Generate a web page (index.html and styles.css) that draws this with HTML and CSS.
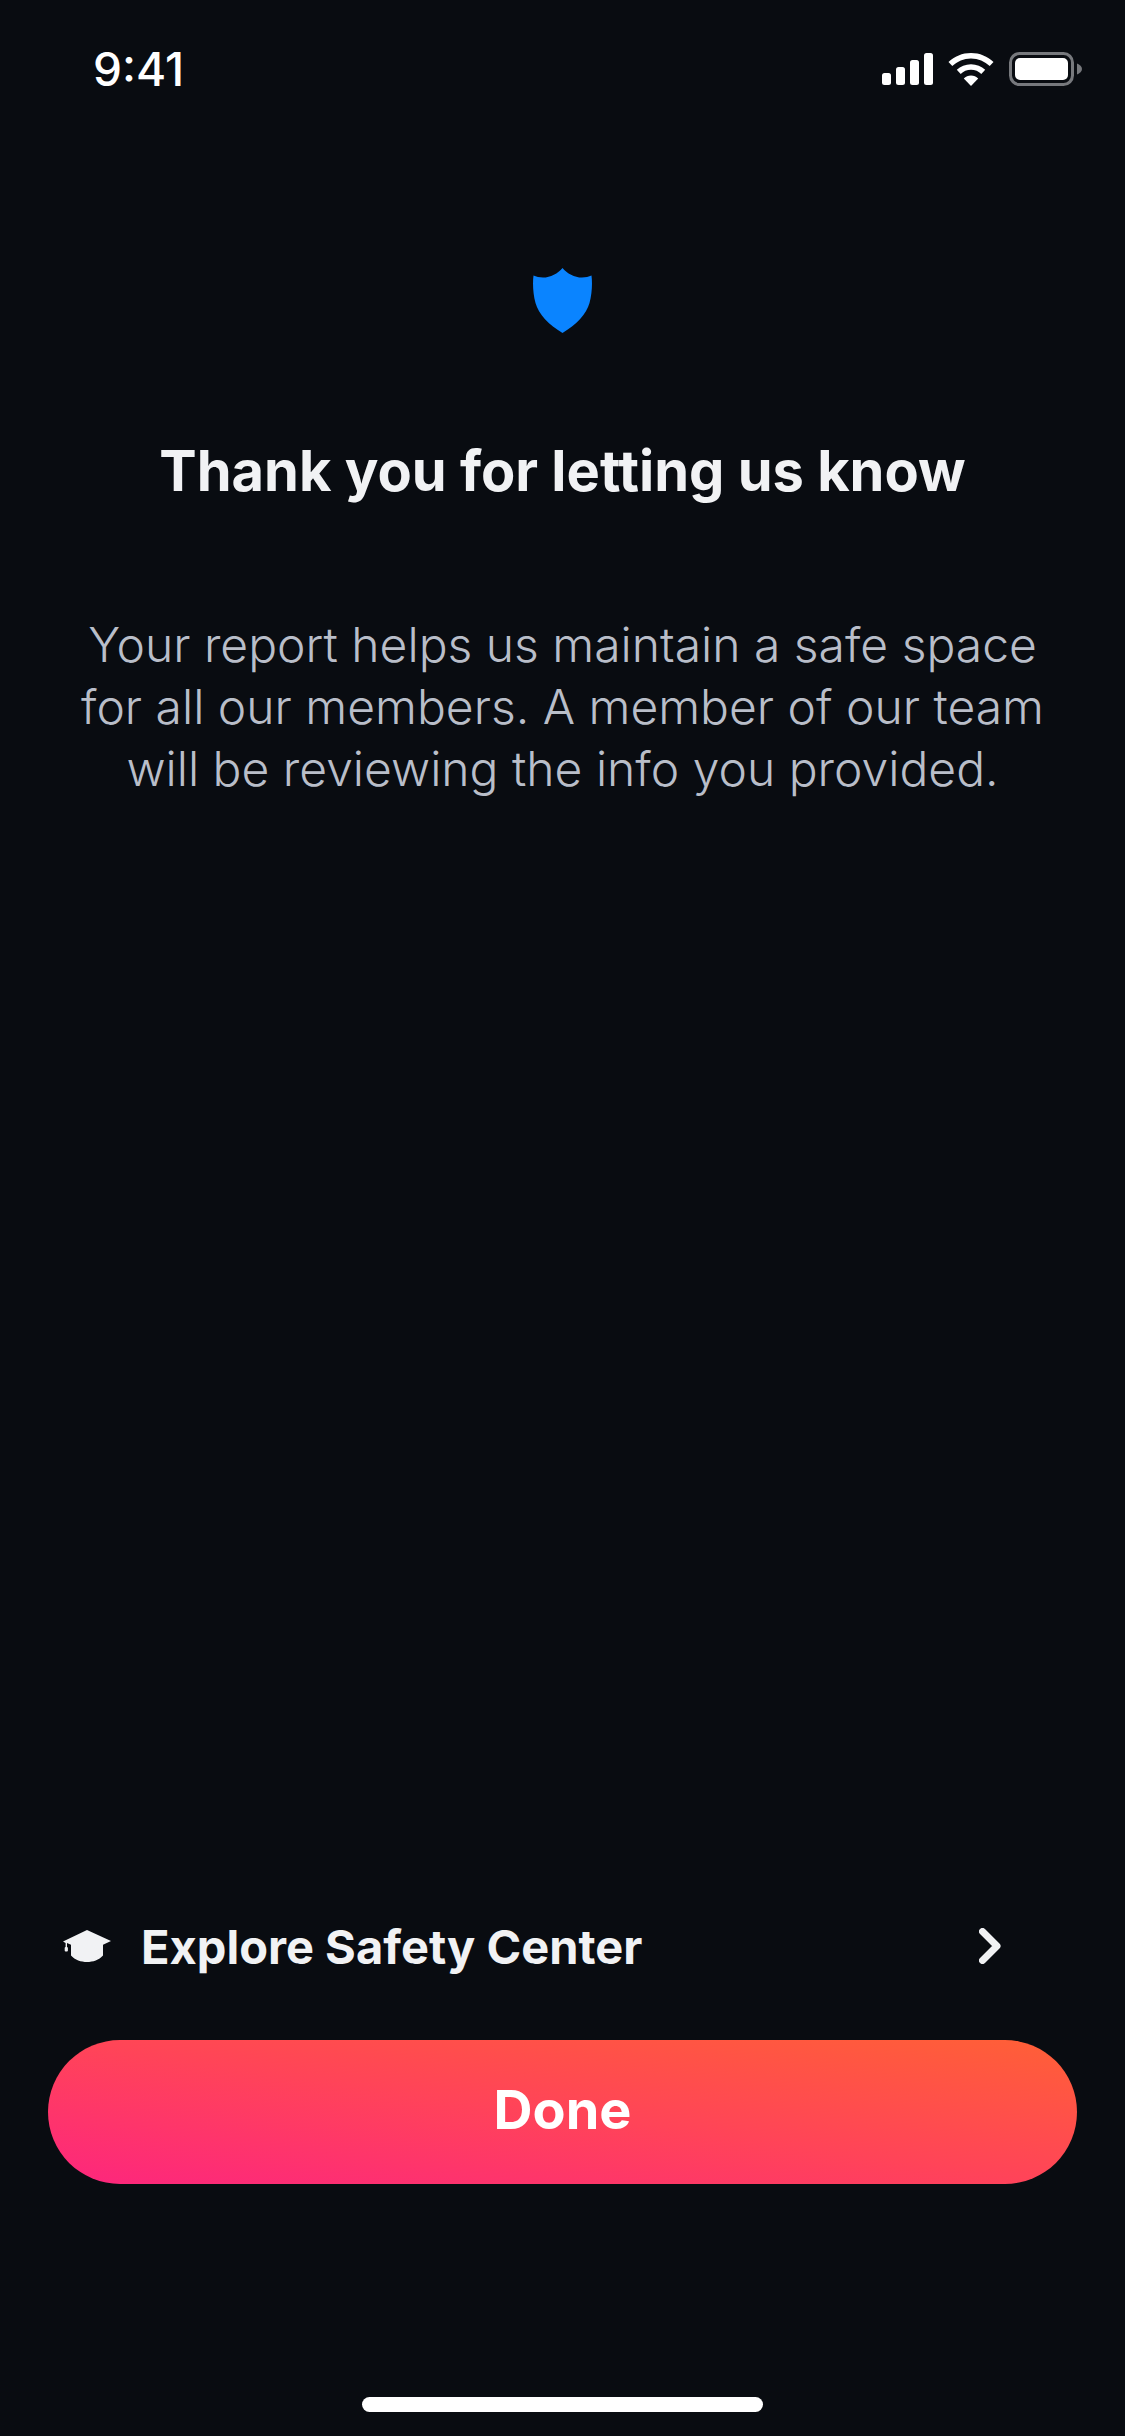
FILE: index.html
```html
<!DOCTYPE html>
<html lang="en">
<head>
<meta charset="utf-8">
<title>Thank you</title>
<link rel="stylesheet" href="styles.css">
</head>
<body>
<main class="screen">
  <header class="status">
    <span class="time">9:41</span>
    <div class="status-icons">
      <svg class="signal" width="51" height="32" viewBox="0 0 51 32"><rect x="0" y="20" width="9" height="12" rx="2.5"/><rect x="14" y="14" width="9" height="18" rx="2.5"/><rect x="28" y="7" width="9" height="25" rx="2.5"/><rect x="42" y="0" width="9" height="32" rx="2.5"/></svg>
      <svg class="wifi" width="46" height="33" viewBox="0 0 46 33"><path d="M23 0C14.300 0 6.400 3.400 .5 9l3.800 4C9.200 8.300 15.800 5.400 23 5.400S36.800 8.300 41.700 13l3.800-4C39.600 3.400 31.700 0 23 0Z"/><path d="M23 11.200c-5.500 0-10.500 2.100-14.200 5.600l3.900 4.100c2.700-2.500 6.300-4.100 10.300-4.100s7.600 1.600 10.300 4.100l3.900-4.100c-3.700-3.500-8.700-5.600-14.200-5.600Z"/><path d="M23 22.600c-2.800 0-5.300 1.100-7.200 2.800L23 33l7.200-7.600c-1.900-1.700-4.400-2.800-7.200-2.800Z"/></svg>
      <svg class="battery" width="73" height="34" viewBox="0 0 73 34"><rect x="1.500" y="1.500" width="62" height="31" rx="9" fill="none" stroke="#77797d" stroke-width="3"/><rect x="6" y="6" width="53" height="22" rx="5" fill="#fff"/><path d="M68 11.500c2.800 1 5 3 5 5.500s-2.200 4.500-5 5.500Z" fill="#77797d"/></svg>
    </div>
  </header>

  <section class="message">
    <svg class="shield" width="59" height="65" viewBox="0 0 59 65"><path d="M29.500 0C34 5.500 41.500 9.600 49 9.600c3.600 0 6.800-.8 9.500-2 1 7.400.5 18-2 27.400C53.500 46 43 57 29.500 65 16 57 5.500 46 2.500 35 0 25.600-.5 15 .5 7.600c2.700 1.200 5.900 2 9.500 2C17.500 9.600 25 5.500 29.500 0Z"/></svg>
    <h1 class="title">Thank you for letting us know</h1>
    <p class="body-text">Your report helps us maintain a safe space<br>for all our members. A member of our team<br>will be reviewing the info you provided.</p>
  </section>

  <div class="actions">
    <a class="safety-row">
      <svg class="cap" width="48" height="32" viewBox="0 0 48 32"><path d="M24 0 48 11 40 14.800V25.500C36 30 30 32 24 32S12 30 8 25.500V14.800L4 13V17.500H2.600V13L0 11.500Z"/><rect x="1.700" y="17" width="3.200" height="4.500" rx="1"/></svg>
      <span class="safety-label">Explore Safety Center</span>
      <svg class="chevron" width="22" height="36" viewBox="0 0 22 36"><path d="M3.500 3.500 18 18 3.500 32.500" fill="none" stroke-width="7" stroke-linecap="round" stroke-linejoin="round"/></svg>
    </a>
    <button class="done">Done</button>
  </div>

  <div class="home-bar"></div>
</main>
</body>
</html>
```

FILE: styles.css
```css
* { box-sizing: border-box; }
html, body { margin: 0; padding: 0; background: #090c11; }
.screen {
  width: 1125px;
  height: 2436px;
  display: flex;
  flex-direction: column;
  background: #090c11;
  color: #fff;
  font-family: "Inter", "Liberation Sans", sans-serif;
  overflow: hidden;
}
.status {
  display: flex;
  align-items: center;
  justify-content: space-between;
  padding: 52px 43px 0 93px;
  height: 86px;
  flex: none;
}
.time {
  font-size: 46px;
  font-weight: 500;
  line-height: 34px;
}
.status-icons { display: flex; align-items: center; gap: 15px; }
.status-icons svg { display: block; fill: #fff; }
.message {
  display: flex;
  flex-direction: column;
  align-items: center;
  padding-top: 182px;
  flex: 1;
}
.shield { display: block; fill: #0a84ff; }
.title {
  margin: 105px 0 0;
  font-size: 56px;
  line-height: 66px;
  font-weight: 700;
  color: #f1f2f4;
  text-align: center;
  white-space: nowrap;
}
.body-text {
  margin: 110px 0 0;
  font-size: 48px;
  line-height: 62px;
  font-weight: 300;
  color: #b9bec9;
  text-align: center;
  white-space: nowrap;
}
.actions { flex: none; padding: 0 48px; display: flex; flex-direction: column; gap: 64px; }
.safety-row {
  display: flex;
  align-items: center;
  height: 60px;
  padding: 0 76px 0 15px;
}
.cap { display: block; fill: #f1f2f4; flex: none; }
.safety-label {
  margin-left: 30px;
  flex: 1;
  font-size: 47px;
  font-weight: 700;
  color: #f1f2f4;
}
.chevron { display: block; stroke: #f1f2f4; flex: none; }
.done {
  display: block;
  width: 1029px;
  height: 144px;
  padding: 0 0 5px;
  border: 0;
  border-radius: 72px;
  background-image: linear-gradient(to top right, #fd267d 0%, #ff4458 50%, #ff6036 100%);
  color: #fff;
  font-family: inherit;
  font-size: 54px;
  font-weight: 700;
}
.home-bar {
  flex: none;
  width: 401px;
  height: 15px;
  margin: 213px auto 24px;
  border-radius: 8px;
  background: #fff;
}
```
